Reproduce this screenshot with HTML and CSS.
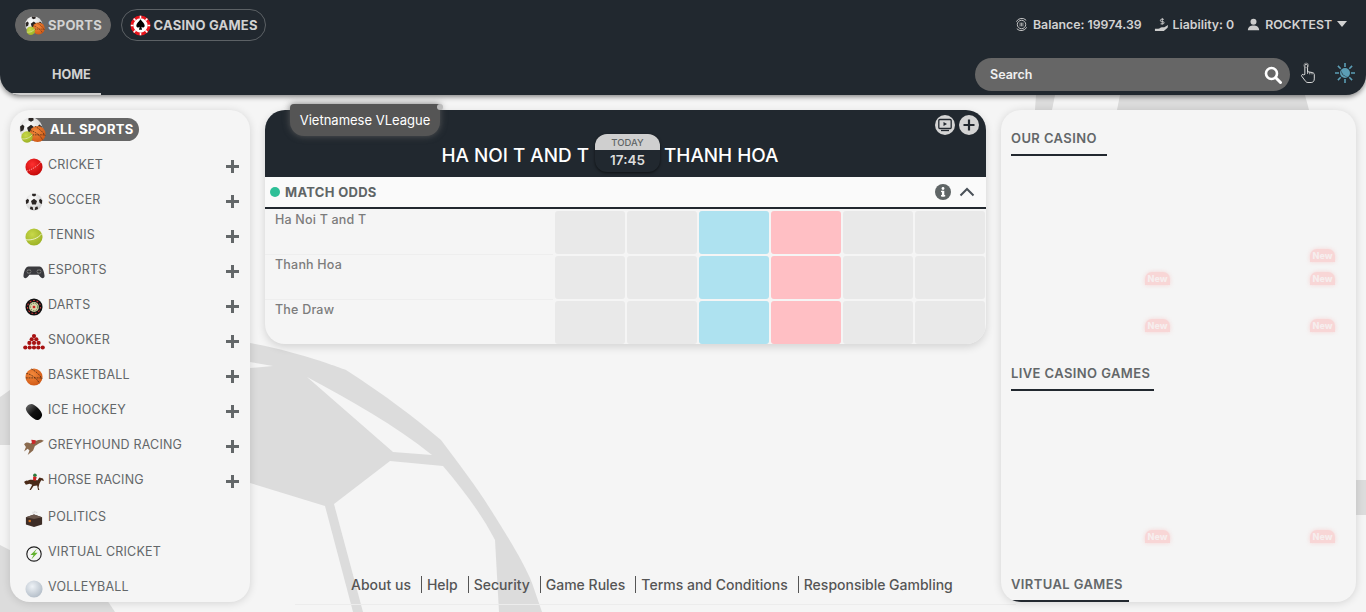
FILE: index.html
```html
<!DOCTYPE html>
<html lang="en">
<head>
<meta charset="utf-8">
<title>Sports</title>
<link rel="stylesheet" href="styles.css">
</head>
<body>
<svg class="defs" aria-hidden="true">
  <defs>
    <radialGradient id="gRed" cx=".4" cy=".35" r=".8"><stop offset="0" stop-color="#ff3030"/><stop offset="1" stop-color="#b80000"/></radialGradient>
    <radialGradient id="gOrange" cx=".4" cy=".35" r=".8"><stop offset="0" stop-color="#f58a3c"/><stop offset="1" stop-color="#c9500f"/></radialGradient>
    <radialGradient id="gTennis" cx=".4" cy=".35" r=".8"><stop offset="0" stop-color="#c8d84a"/><stop offset="1" stop-color="#94ab1e"/></radialGradient>
    <radialGradient id="gWhite" cx=".4" cy=".35" r=".8"><stop offset="0" stop-color="#fff"/><stop offset="1" stop-color="#c4c4c4"/></radialGradient>
    <radialGradient id="gVolley" cx=".4" cy=".35" r=".8"><stop offset="0" stop-color="#eef2f6"/><stop offset="1" stop-color="#a9b4c0"/></radialGradient>
    <linearGradient id="gPuck" x1="0" y1="0" x2="1" y2="1"><stop offset="0" stop-color="#777"/><stop offset=".5" stop-color="#111"/><stop offset="1" stop-color="#000"/></linearGradient>
    <symbol id="i-soccer" viewBox="0 0 20 20"><circle cx="10" cy="10" r="9.5" fill="url(#gWhite)"/><path d="M10 6.5l3.3 2.4-1.2 3.9H7.9L6.7 8.9z" fill="#2a2523"/><path d="M8 .8l4 0 .2 2L10 4 7.8 2.8zM.9 8l2.2-1.7L4.500 8 3.700 11 1.200 12.300zM19.100 8l-2.200-1.700L15.500 8l.8 3 2.500 1.300zM5.500 17.800l.6-2.800 2.400.6.700 3.700zM14.500 17.800l-.6-2.800-2.400.6-.7 3.700z" fill="#2a2523"/></symbol>
    <symbol id="i-tennis" viewBox="0 0 20 20"><circle cx="10" cy="10" r="9.500" fill="url(#gTennis)"/><path d="M1 13c6 1 13-1 18-7" fill="none" stroke="#f2f5d8" stroke-width="1"/></symbol>
    <symbol id="i-basket" viewBox="0 0 20 20"><circle cx="10" cy="10" r="9.500" fill="url(#gOrange)"/><path d="M1.500 6c6 1 12 6 14.500 11M7 1c4 2 9 6 12 11M1 11h18" fill="none" stroke="#3a2415" stroke-width=".8" stroke-dasharray="2 1"/></symbol>
    <symbol id="i-cluster" viewBox="0 0 28 28"><use href="#i-soccer" x="1" y="1" width="24" height="24"/><use href="#i-basket" x="11" y="8.500" width="17" height="19"/><use href="#i-tennis" x="3" y="15" width="12" height="12"/></symbol>
  </defs>
</svg>

<svg class="bg-art" viewBox="0 0 1366 612" aria-hidden="true">
  <path class="art-g" d="M250 343C300 352 346 370 346 370C385 395 415 418 441 440C460 465 475 485 489 507C510 540 525 565 532 583L542 612H250Z"/>
  <path class="art-w" d="M250 362L273 366L250 368Z"/>
  <path class="art-w" d="M307 377C350 400 395 425 432 455L393 452Z"/>
  <path class="art-w" d="M390 461L443 466C465 492 482 515 495 540L499 612H363L334 504Z"/>
  <path class="art-w" d="M250 483L325 506L353 612H250Z"/>
  <path class="art-g" d="M0 545L107 600L115 612H0Z"/>
  <path class="art-g" d="M0 397L10 390V445H0Z"/>
  <path class="art-g" d="M1036 95H1055L1052 110H1035Z"/>
  <path class="art-g" d="M1120 95H1305L1309 110H1117Z"/>
  <path class="art-g" d="M1356 480H1366V515H1356Z"/>
</svg>

<header class="topbar">
  <div class="topbar-row">
    <nav class="product-tabs">
      <a class="product-tab product-tab-active"><svg class="tab-icon"><use href="#i-cluster"/></svg>SPORTS</a>
      <a class="product-tab"><svg class="tab-icon" viewBox="0 0 20 20"><circle cx="10" cy="10" r="9.500" fill="#e8141c"/><circle cx="10" cy="10" r="6.800" fill="#fff"/><path d="M10 4c1.500 2.500 4 3.700 4 6.200 0 1.700-2.200 2.200-3.200 1l.7 2.800H8.500l.7-2.800c-1 1.200-3.200.7-3.200-1C6 7.700 8.500 6.500 10 4z" fill="#000"/><path d="M10 .8v2.400M10 16.800v2.400M.8 10h2.400M16.800 10h2.400M3.500 3.500l1.700 1.700M14.800 14.800l1.700 1.700M3.500 16.500l1.700-1.700M14.800 5.200l1.700-1.700" stroke="#fff" stroke-width="1.500"/></svg>CASINO GAMES</a>
    </nav>
    <div class="account">
      <span class="account-item"><svg class="acct-icon" viewBox="0 0 16 16"><circle cx="8" cy="8" r="4.500" fill="none" stroke="#ccc" stroke-width="1"/><path d="M2.500 5A6.500 6.500 0 0 1 13 3.500M13.500 11A6.500 6.500 0 0 1 3 12.500" fill="none" stroke="#ccc" stroke-width="1"/><path d="M6.500 10V6M8 10V6M9.500 10V6" stroke="#ccc" stroke-width=".8"/></svg>Balance: 19974.39</span>
      <span class="account-item"><svg class="acct-icon" viewBox="0 0 16 16"><path d="M1 12.500h3.500c2 0 2-1.500 4-1.500h2.500l4-2.500-.5 3-4 3.500H1z" fill="#ccc"/><path d="M8.800 1v7M10.500 2.500H8a1.200 1.200 0 0 0 0 2.400h1.500a1.200 1.200 0 0 1 0 2.400H7" fill="none" stroke="#ccc" stroke-width="1"/></svg>Liability: 0</span>
      <span class="account-item"><svg class="acct-icon" viewBox="0 0 16 16"><circle cx="8" cy="5" r="3.200" fill="#ccc"/><path d="M2 14c0-3.500 3-5 6-5s6 1.500 6 5z" fill="#ccc"/></svg>ROCKTEST<span class="caret"></span></span>
    </div>
  </div>
  <div class="topbar-row topbar-row-lower">
    <a class="home-link">HOME</a>
    <div class="tools">
      <div class="search"><span>Search</span><svg class="search-icon" viewBox="0 0 18 18"><circle cx="7.500" cy="7.500" r="5.500" fill="none" stroke="#fff" stroke-width="2.600"/><path d="M11.800 11.800l4.700 4.700" stroke="#fff" stroke-width="3" stroke-linecap="round"/></svg></div>
      <svg class="tool-icon" viewBox="0 0 20 24"><path d="M6.500 13V3.200a1.500 1.500 0 0 1 3 0V10l5.500 1c1.500.4 2 1.300 2 2.500V18c0 2.500-1.500 4-3.500 4H10c-1.500 0-2.500-.8-3.200-2L3 15c-.8-1.300 1-2.800 2.200-1.500z" fill="none" stroke="#ddd" stroke-width="1.100"/><path d="M9.500 7.500v5M12 10.500v2.500M14.500 11v2" stroke="#ddd" stroke-width=".9"/><circle cx="8" cy="3" r="2.600" fill="none" stroke="#999" stroke-width=".8"/></svg>
      <svg class="tool-icon tool-icon-sun" viewBox="0 0 22 22"><circle cx="11" cy="11" r="5" fill="#5b9db5"/><path d="M11 1v4M11 17v4M1 11h4M17 11h4M3.900 3.900l2.800 2.800M15.300 15.300l2.800 2.800M3.900 18.100l2.800-2.800M15.300 6.700l2.800-2.800" stroke="#5b9db5" stroke-width="1.600"/><path d="M8 8a4.500 4.500 0 0 0 6 6 5 5 0 0 1-6-6z" fill="#22282f"/></svg>
    </div>
  </div>
</header>

<main class="layout">
  <aside class="panel sports-panel">
    <div class="all-sports"><svg class="all-icon"><use href="#i-cluster"/></svg><span class="all-label">ALL SPORTS</span></div>
    <ul class="sport-list">
      <li class="sport"><svg class="sport-icon" viewBox="0 0 20 20"><circle cx="10" cy="10" r="9.500" fill="url(#gRed)"/><path d="M2 14.500C8 13 15 8 18 4" fill="none" stroke="#ffc9c9" stroke-width=".8" stroke-dasharray="1.500 1"/></svg><span class="sport-name">CRICKET</span><span class="plus"></span></li>
      <li class="sport"><svg class="sport-icon"><use href="#i-soccer"/></svg><span class="sport-name">SOCCER</span><span class="plus"></span></li>
      <li class="sport"><svg class="sport-icon"><use href="#i-tennis"/></svg><span class="sport-name">TENNIS</span><span class="plus"></span></li>
      <li class="sport"><svg class="sport-icon sport-icon-wide" viewBox="0 0 24 16"><path d="M6 2h12c3 0 5 5 5.500 10 .3 3-3 3.500-4.500 1.500L17 11H7l-2 2.500C3.500 15.500.2 15 .5 12 1 7 3 2 6 2z" fill="#3a3a3e"/><circle cx="6.500" cy="7.500" r="2.600" fill="#777"/><circle cx="17.500" cy="7.500" r="2.600" fill="#777"/><path d="M6.500 5.500v4M4.500 7.500h4M17.500 5.500v4M15.500 7.500h4" stroke="#222" stroke-width=".8"/></svg><span class="sport-name">ESPORTS</span><span class="plus"></span></li>
      <li class="sport"><svg class="sport-icon" viewBox="0 0 20 20"><circle cx="10" cy="10" r="9.500" fill="#111"/><circle cx="10" cy="10" r="7.200" fill="none" stroke="#c33" stroke-width="1.200" stroke-dasharray="2 2"/><circle cx="10" cy="10" r="5.500" fill="#d9cfa8"/><circle cx="10" cy="10" r="4.200" fill="none" stroke="#3a7a3a" stroke-width="1.100" stroke-dasharray="1.500 1.500"/><circle cx="10" cy="10" r="1.500" fill="#c22"/></svg><span class="sport-name">DARTS</span><span class="plus"></span></li>
      <li class="sport"><svg class="sport-icon sport-icon-wide" viewBox="0 0 24 18"><g fill="#a81212"><circle cx="12" cy="2.500" r="2.300"/><circle cx="9.500" cy="6" r="2.300"/><circle cx="14.500" cy="6" r="2.300"/><circle cx="7" cy="10" r="2.300"/><circle cx="12" cy="10" r="2.300"/><circle cx="17" cy="10" r="2.300"/><circle cx="2.500" cy="15" r="2.300"/><circle cx="7.300" cy="15" r="2.300"/><circle cx="12" cy="15" r="2.300"/><circle cx="16.700" cy="15" r="2.300"/><circle cx="21.500" cy="15" r="2.300"/></g></svg><span class="sport-name">SNOOKER</span><span class="plus"></span></li>
      <li class="sport"><svg class="sport-icon"><use href="#i-basket"/></svg><span class="sport-name">BASKETBALL</span><span class="plus"></span></li>
      <li class="sport"><svg class="sport-icon" viewBox="0 0 20 20"><path d="M1 7c-.5-2.500 3-6 6-6 4 0 12 8 12 12 0 3-3 6-5.500 6C10 19 1.500 11 1 7z" fill="url(#gPuck)"/></svg><span class="sport-name">ICE HOCKEY</span><span class="plus"></span></li>
      <li class="sport"><svg class="sport-icon sport-icon-wide" viewBox="0 0 24 20"><path d="M1 7c2-3 5-2 7-1 3-2 8-4 12-4l3 1-3 2c-3 1-5 3-7 4l-2 5-6 5 2-5-2-2-4 3 2-5z" fill="#8a6a4e"/><path d="M9 2l5 .5-.5 3.500-3.500 1z" fill="#c92a2a"/></svg><span class="sport-name">GREYHOUND RACING</span><span class="plus"></span></li>
      <li class="sport"><svg class="sport-icon sport-icon-wide" viewBox="0 0 24 20"><path d="M1 10c1-2 3-1 5-2 3-1 7 0 10 0l2-3 4 1 1 3-3-1-2 4-1 4 1 3h-1.500l-1-5-4 .5-3 4.500H7l3-6-3-1-4 1z" fill="#4a2a18"/><circle cx="13" cy="2.500" r="2" fill="#2a7a3a"/><path d="M11 4l4 .5-1 4-3-.5z" fill="#c22"/></svg><span class="sport-name">HORSE RACING</span><span class="plus"></span></li>
      <li class="sport sport-gap"><svg class="sport-icon" viewBox="0 0 20 20"><path d="M1 8l9-3 9 3v8l-9 3-9-3z" fill="#3d2d26"/><path d="M1 8l9-3 9 3-9 2z" fill="#6a574c"/><rect x="4" y="11" width="2.500" height="2.500" fill="#d5701e"/><path d="M9 4V2M11 3.500V1M13 3.500V2" stroke="#ccc" stroke-width=".8"/></svg><span class="sport-name">POLITICS</span></li>
      <li class="sport"><svg class="sport-icon" viewBox="0 0 20 20"><circle cx="10" cy="10" r="8" fill="#f5f5f5" stroke="#222" stroke-width="1.300"/><path d="M13.500 4L6 11h3.500L7 16l7-7.500h-3.500z" fill="#62b22f"/></svg><span class="sport-name">VIRTUAL CRICKET</span></li>
      <li class="sport"><svg class="sport-icon" viewBox="0 0 20 20"><circle cx="10" cy="10" r="9.500" fill="url(#gVolley)"/></svg><span class="sport-name">VOLLEYBALL</span></li>
    </ul>
  </aside>

  <section class="centre">
    <article class="match">
      <div class="match-head">
        <div class="league-tip">Vietnamese VLeague<span class="tip-dot"></span></div>
        <div class="match-actions">
          <span class="round-btn"><svg viewBox="0 0 16 16"><rect x="1.800" y="2.500" width="12.400" height="9" rx="1" fill="none" stroke="#22282f" stroke-width="1.300"/><path d="M6.500 5l3.500 2-3.500 2z" fill="#22282f"/><path d="M4 13.500h8" stroke="#22282f" stroke-width="1.300"/></svg></span>
          <span class="round-btn"><svg viewBox="0 0 16 16"><path d="M8 2.500v11M2.500 8h11" stroke="#22282f" stroke-width="2.200"/></svg></span>
        </div>
        <div class="teams">
          <span class="team">HA NOI T AND T</span>
          <div class="kickoff"><span class="kick-day">TODAY</span><span class="kick-time">17:45</span></div>
          <span class="team">THANH HOA</span>
        </div>
      </div>
      <div class="market-bar">
        <span class="live-dot"></span><span class="market-name">MATCH ODDS</span>
        <svg class="info-icon" viewBox="0 0 16 16"><circle cx="8" cy="8" r="8" fill="#5f6566"/><rect x="6.900" y="6.800" width="2.400" height="5.700" fill="#fff"/><rect x="6" y="11" width="4.200" height="1.500" fill="#fff"/><rect x="6" y="6.800" width="2" height="1.300" fill="#fff"/><circle cx="8" cy="4.500" r="1.400" fill="#fff"/></svg>
        <svg class="chev-icon" viewBox="0 0 16 10"><path d="M1.500 8.500L8 2l6.500 6.500" fill="none" stroke="#4a5158" stroke-width="2"/></svg>
      </div>
      <div class="odds">
        <div class="runner"><span class="runner-name">Ha Noi T and T</span><span class="cell"></span><span class="cell"></span><span class="cell cell-back"></span><span class="cell cell-lay"></span><span class="cell"></span><span class="cell"></span></div>
        <div class="runner"><span class="runner-name">Thanh Hoa</span><span class="cell"></span><span class="cell"></span><span class="cell cell-back"></span><span class="cell cell-lay"></span><span class="cell"></span><span class="cell"></span></div>
        <div class="runner"><span class="runner-name">The Draw</span><span class="cell"></span><span class="cell"></span><span class="cell cell-back"></span><span class="cell cell-lay"></span><span class="cell"></span><span class="cell"></span></div>
      </div>
    </article>
    <footer class="foot">
      <a class="foot-link">About us</a><a class="foot-link">Help</a><a class="foot-link">Security</a><a class="foot-link">Game Rules</a><a class="foot-link">Terms and Conditions</a><a class="foot-link">Responsible Gambling</a>
    </footer>
  </section>

  <aside class="panel games-panel">
    <h2 class="games-title games-title-casino">OUR CASINO</h2>
    <div class="tiles tiles-casino">
      <span class="tile"></span><span class="tile"><span class="badge">New</span></span>
      <span class="tile"><span class="badge">New</span></span><span class="tile"><span class="badge">New</span></span>
      <span class="tile"><span class="badge">New</span></span><span class="tile"><span class="badge">New</span></span>
    </div>
    <h2 class="games-title games-title-live">LIVE CASINO GAMES</h2>
    <div class="tiles tiles-live">
      <span class="tile"><span class="badge">New</span></span><span class="tile"><span class="badge">New</span></span>
    </div>
    <h2 class="games-title games-title-virtual">VIRTUAL GAMES</h2>
  </aside>
</main>
</body>
</html>
```
FILE: styles.css
```css
* { box-sizing: border-box; }
html, body { margin: 0; height: 612px; overflow: hidden; }
body {
  background: #f5f5f5;
  font-family: "Inter", "Liberation Sans", sans-serif;
  position: relative;
}
a { color: inherit; text-decoration: none; }
ul { list-style: none; margin: 0; padding: 0; }
h2 { margin: 0; }
.defs { position: absolute; width: 0; height: 0; }
.bg-art { position: absolute; left: 0; top: 0; width: 1366px; height: 612px; }
.art-g { fill: #dcdcdc; }
.art-w { fill: #f5f5f5; }

/* top bar */
.topbar {
  position: relative;
  height: 95px;
  background: #21282f;
  border-radius: 0 0 20px 20px;
  box-shadow: 0 2px 5px rgba(0, 0, 0, .45);
  display: flex;
  flex-direction: column;
  overflow: hidden;
}
.topbar-row { display: flex; justify-content: space-between; align-items: center; }
.topbar-row:first-child { padding: 9px 19px 0 15px; height: 50px; align-items: flex-start; }
.topbar-row-lower { flex: 1; align-items: stretch; padding-right: 10px; }
.product-tabs { display: flex; gap: 10px; }
.product-tab {
  height: 32px;
  display: flex;
  align-items: center;
  gap: 3px;
  padding: 0 7.500px 0 8px;
  border: 1px solid #5c6165;
  border-radius: 16px;
  color: #d2d2d2;
  font-size: 13px;
  font-weight: 700;
  letter-spacing: .22px;
}
.product-tab-active { background: #666; border-color: #666; }
.tab-icon { width: 21px; height: 21px; flex: none; }
.account { display: flex; align-items: center; gap: 12px; height: 30px; }
.account-item {
  display: flex;
  align-items: center;
  gap: 4px;
  color: #d2d2d2;
  font-size: 12.300px;
  font-weight: 600;
  white-space: nowrap;
}
.acct-icon { width: 15px; height: 15px; flex: none; }
.caret {
  width: 0; height: 0;
  margin-left: 1px;
  border: 5.500px solid transparent;
  border-top: 6px solid #d2d2d2;
  border-bottom: 0;
}
.home-link {
  width: 101px;
  height: 45px;
  padding: 17px 0 0 52px;
  color: #d2d2d2;
  font-size: 12.700px;
  font-weight: 700;
  border-bottom: 2px solid #cfcfcf;
}
.tools { display: flex; align-items: flex-start; padding-top: 8px; }
.search {
  width: 315px;
  height: 33px;
  background: #666;
  border-radius: 17px;
  display: flex;
  align-items: center;
  justify-content: space-between;
  padding: 0 8px 0 15px;
  color: #f0f0f0;
  font-size: 12.500px;
  font-weight: 600;
}
.search-icon { width: 18px; height: 18px; }
.tool-icon { width: 18px; height: 23px; margin: 4px 0 0 9px; }
.tool-icon-sun { width: 22px; height: 22px; margin-left: 17px; }

/* columns */
.layout {
  position: relative;
  height: 517px;
  padding: 15px 10px 10px;
  display: grid;
  grid-template-columns: 240px 721px 355px;
  column-gap: 15px;
}
.panel {
  background: #f5f5f5;
  border-radius: 20px;
  box-shadow: 0 1px 8px rgba(0, 0, 0, .14);
  overflow: hidden;
}

/* sports list */
.sports-panel { padding-top: 6px; }
.all-sports { position: relative; display: flex; align-items: center; height: 26px; padding-left: 20px; }
.all-icon { position: absolute; left: 8px; top: 0; width: 28px; height: 28px; }
.all-label {
  height: 23px;
  width: 109px;
  padding: 3px 0 0 20px;
  border-radius: 0 12px 12px 0;
  background: #666;
  color: #fff;
  font-size: 13px;
  font-weight: 700;
  letter-spacing: .35px;
}
.sport-list { padding-top: 9px; }
.sport { display: flex; align-items: flex-start; height: 35px; padding-left: 15px; position: relative; color: #636769; }
.sport-gap { margin-top: 2px; }
.sport-icon { width: 18px; height: 18px; flex: none; margin-top: 7px; }
.sport-icon-wide { width: 22px; margin-left: -2px; margin-right: -2px; }
.sport-name { margin: 6px 0 0 5px; font-size: 12.500px; letter-spacing: .2px; white-space: nowrap; line-height: 16px; }
.plus { position: absolute; left: 216px; top: 8.500px; width: 13px; height: 13px; background: linear-gradient(#636769, #636769) center / 13px 3px no-repeat, linear-gradient(#636769, #636769) center / 3px 13px no-repeat; }

/* centre */
.centre { display: flex; flex-direction: column; min-width: 0; }
.match { border-radius: 20px; box-shadow: 0 3px 8px rgba(0, 0, 0, .14); position: relative; background: #f5f5f5; }
.match-head {
  position: relative;
  height: 67px;
  background: #21282f;
  border-radius: 20px 20px 0 0;
}
.league-tip {
  position: absolute;
  left: 25px;
  top: -6px;
  width: 150px;
  height: 32px;
  padding-top: 8px;
  text-align: center;
  background: #555;
  border-radius: 4px 0 14px 14px;
  box-shadow: 0 0 7px rgba(95, 95, 95, .85);
  color: #fff;
  font-size: 13px;
}
.tip-dot { position: absolute; right: -3px; top: 0; width: 6px; height: 6px; border-radius: 50%; background: #bbb; }
.match-actions { position: absolute; right: 7px; top: 5px; display: flex; gap: 4px; }
.round-btn { width: 20px; height: 20px; border-radius: 50%; background: #d4d4d4; display: flex; align-items: center; justify-content: center; }
.round-btn svg { width: 16px; height: 16px; }
.teams {
  display: flex;
  align-items: flex-start;
  justify-content: center;
  padding: 24px 31px 0 0;
}
.team { color: #fff; font-size: 18.900px; font-weight: 500; margin-top: 12px; line-height: 20px; white-space: nowrap; }
.kickoff {
  width: 65px;
  height: 38px;
  margin: 0 4px 0 6px;
  display: flex;
  flex-direction: column;
  border-radius: 12px;
  overflow: hidden;
  background: #21282f;
  box-shadow: 0 1px 3px rgba(0, 0, 0, .6);
  text-align: center;
}
.kick-day { height: 16px; background: #cfcfcf; color: #5f6566; font-size: 9.500px; line-height: 17px; font-weight: 500; }
.kick-time { color: #dcdcdc; font-size: 13.500px; font-weight: 600; line-height: 21px; }
.market-bar {
  height: 32px;
  display: flex;
  align-items: center;
  padding: 0 11px 0 5px;
  background: #fafafa;
  border-bottom: 2px solid #22282f;
}
.live-dot { width: 10px; height: 10px; border-radius: 50%; background: #2ebf97; margin-right: 5px; }
.market-name { flex: 1; color: #5f6566; font-size: 13px; font-weight: 700; letter-spacing: .3px; }
.info-icon { width: 16px; height: 16px; margin-right: 8px; }
.chev-icon { width: 16px; height: 10px; }
.odds { display: flex; flex-direction: column; padding-top: 2px; border-radius: 0 0 20px 20px; overflow: hidden; }
.runner { display: grid; grid-template-columns: 288px repeat(6, 70px); column-gap: 2px; height: 45px; padding-bottom: 2px; }
.runner:last-child { height: 43px; padding-bottom: 0; }
.runner-name { margin-bottom: -1px; border-bottom: 1px solid #eee; padding: 1px 0 0 10px; color: #7c7c7c; font-size: 12.500px; font-weight: 500; letter-spacing: .2px; line-height: 16px; }
.runner:last-child .runner-name { margin-bottom: 0; border-bottom: 0; }
.cell { background: #e9e9e9; border-radius: 3px; }
.cell-back { background: #aee2f0; }
.cell-lay { background: #ffbfc4; }

/* footer */
.foot {
  margin: auto -30px -3px 30px;
  height: 34px;
  padding: 5px 0 0 51px;
  border-bottom: 1px solid #ececec;
  display: flex;
  align-items: flex-start;
}
.foot-link {
  padding: 0 10px 0 5px;
  border-right: 1px solid #555;
  color: #555;
  font-size: 14px;
  font-weight: 500;
  line-height: 17px;
  white-space: nowrap;
}
.foot-link:last-child { border-right: 0; }

/* games */
.games-panel { padding: 20px 0 0 10px; }
.games-title {
  width: max-content;
  padding: 0 0 8px 0;
  border-bottom: 2px solid #22282f;
  color: #636769;
  font-size: 13px;
  font-weight: 600;
  line-height: 16px;
  letter-spacing: .4px;
}
.games-title-casino { padding-right: 10px; }
.games-title-live { padding-right: 4px; }
.games-title-virtual { padding-right: 6px; }
.tiles { display: grid; grid-template-columns: 159px 165px; }
.tiles-casino { grid-template-rows: 23px 47px 46px; padding-top: 93px; height: 209px; }
.tiles-live { grid-template-rows: 46px; padding-top: 139px; height: 185px; }
.tile { display: flex; justify-content: flex-end; align-items: flex-start; }
.badge {
  width: 25px;
  height: 13px;
  border-radius: 7px 7px 0 0;
  background: #f8d6d6;
  box-shadow: 0 0 4px rgba(248, 200, 200, .7);
  color: #f6eeee;
  font-size: 9px;
  font-weight: 800;
  line-height: 13px;
  text-align: center;
}
```
